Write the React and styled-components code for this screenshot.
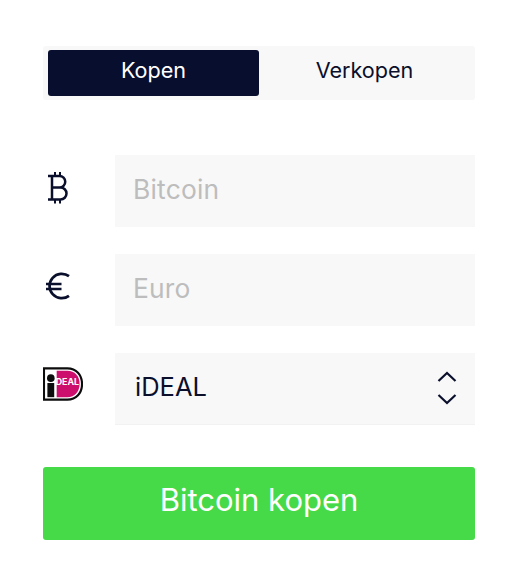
import React from 'react';
import styled, { createGlobalStyle } from 'styled-components';

const Global = createGlobalStyle`
  html, body { margin: 0; padding: 0; background: #fff; }
  body { font-family: Inter, "Liberation Sans", sans-serif; color: #0a0f2c; }
  input::placeholder { color: #bdbdbd; opacity: 1; }
`;

const Page = styled.div`
  width: 432px;
  padding: 46px 44px 39px 43px;
  display: flex;
  flex-direction: column;
`;

const Tabs = styled.div`
  display: grid;
  grid-template-columns: 211px 211px;
  height: 46px;
  padding: 4px 5px;
  background: #f8f8f8;
  border-radius: 3px;
  margin-bottom: 55px;
`;

const Tab = styled.div`
  display: flex;
  align-items: center;
  justify-content: center;
  font-size: 21.6px;
  padding-bottom: 6px;
  box-sizing: border-box;
  border-radius: 3px;
  background: ${p => (p.$active ? '#080e2e' : 'transparent')};
  color: ${p => (p.$active ? '#fff' : '#0a0f2c')};
`;

const Rows = styled.div`
  display: flex;
  flex-direction: column;
  gap: 27px;
  margin-bottom: 42px;
`;

const Row = styled.div`
  display: grid;
  grid-template-columns: 72px 360px;
  height: 72px;
`;

const IconCell = styled.div`
  padding-top: ${p => p.$top}px;
  color: #0a0f2c;
`;

const Field = styled.input`
  width: 360px;
  height: 72px;
  box-sizing: border-box;
  border: 0;
  outline: 0;
  background: #f8f8f8;
  padding: 0 18px 5px;
  font: 400 26.4px Inter, "Liberation Sans", sans-serif;
  letter-spacing: 0.2px;
  color: #0a0f2c;
`;

const Select = styled.div`
  height: 72px;
  box-sizing: border-box;
  display: flex;
  align-items: center;
  justify-content: space-between;
  background: #f8f8f8;
  border-bottom: 1px solid #f2f2f2;
  padding: 0 18px 4px 20px;
  font-size: 25.5px;
  color: #0a0f2c;
`;

const Chevrons = styled.svg`
  display: block;
  margin-top: 3px;
`;

const Submit = styled.button`
  height: 73px;
  width: 432px;
  border: 0;
  border-radius: 3px;
  background: #46d948;
  color: #fff;
  font: 400 31px Inter, "Liberation Sans", sans-serif;
  padding: 0 0 9px;
`;

const BitcoinIcon = () => (
  <svg width="22" height="34" viewBox="0 0 22 34" fill="none" stroke="#0a0f2c" strokeWidth="2.5" style={{ display: 'block', marginLeft: 4 }}>
    <path d="M1 5h11.500a5.500 5.500 0 0 1 0 11.500H5M5 16.500h8.500a6 6 0 0 1 0 12H1M5 5v23.500" />
    <path d="M8 1v4M13 1v4M8 28.500v4M13 28.500v4" strokeWidth="2" />
  </svg>
);

const EuroIcon = () => (
  <svg width="26" height="28" viewBox="0 0 26 28" fill="none" stroke="#0a0f2c" strokeWidth="2.7" style={{ display: 'block', marginLeft: 2 }}>
    <path d="M24 4.200A12.200 12.200 0 1 0 24 23.800" />
    <path d="M1 12h15.500M1 17h15.500" />
  </svg>
);

const IdealIcon = () => (
  <svg width="40" height="34" viewBox="0 0 41 34">
    <path d="M1 1h24c9 0 15 6.500 15 16s-6 16-15 16H1z" fill="#fff" stroke="#0c0c0c" strokeWidth="2.200" />
    <path d="M14 3.500h11c7.500 0 12.500 5.500 12.500 13.500S32.500 30.500 25 30.500H14z" fill="#cc0f6d" />
    <rect x="4.500" y="16" width="7" height="14.500" fill="#0c0c0c" />
    <circle cx="8" cy="11" r="3.900" fill="#0c0c0c" />
    <text x="13" y="18" fontFamily="Inter, 'Liberation Sans', sans-serif" fontSize="9" fontWeight="700" fill="#fff" textLength="24" lengthAdjust="spacingAndGlyphs">DEAL</text>
  </svg>
);

export default function App() {
  return (
    <>
      <Global />
      <Page>
        <Tabs>
          <Tab $active>Kopen</Tab>
          <Tab>Verkopen</Tab>
        </Tabs>
        <Rows>
          <Row>
            <IconCell $top={16}><BitcoinIcon /></IconCell>
            <Field placeholder="Bitcoin" readOnly />
          </Row>
          <Row>
            <IconCell $top={18}><EuroIcon /></IconCell>
            <Field placeholder="Euro" readOnly />
          </Row>
          <Row>
            <IconCell $top={14}><IdealIcon /></IconCell>
            <Select>
              <span>iDEAL</span>
              <Chevrons width="20" height="34" viewBox="0 0 20 34" fill="none" stroke="#0a0f2c" strokeWidth="2.2">
                <path d="M1.500 10L10 2l8.500 8M1.500 24l8.500 8 8.500-8" />
              </Chevrons>
            </Select>
          </Row>
        </Rows>
        <Submit>Bitcoin kopen</Submit>
      </Page>
    </>
  );
}
